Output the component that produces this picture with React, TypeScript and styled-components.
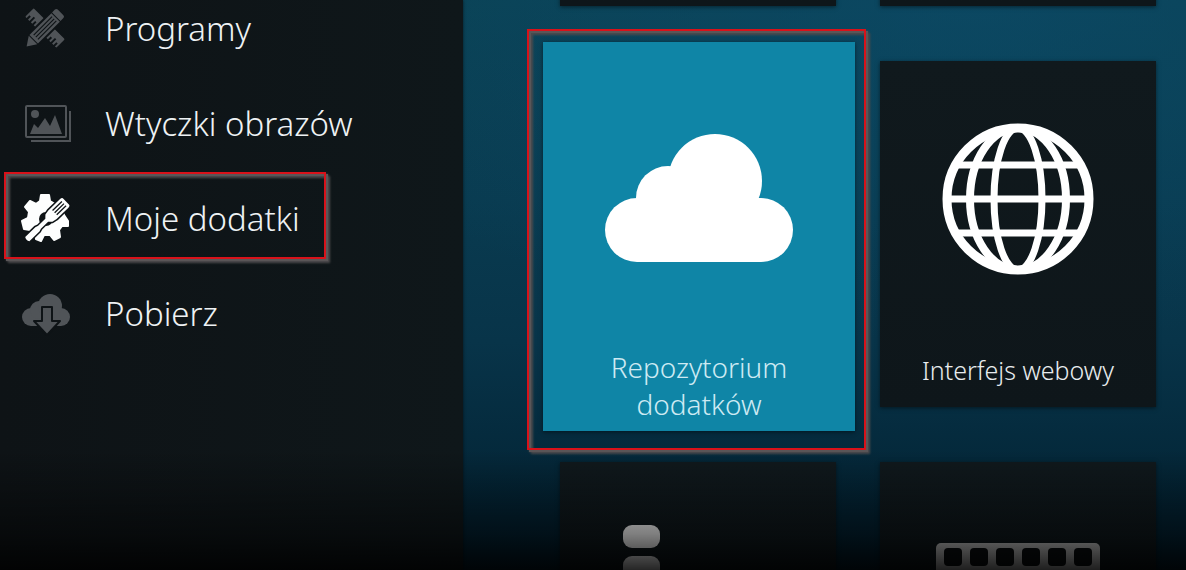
import React from "react";
import styled, { createGlobalStyle, css } from "styled-components";

const GlobalStyle = createGlobalStyle`
  * { box-sizing: border-box; }
  body {
    margin: 0;
    background: #000;
    font-family: "Noto Sans", "Open Sans", sans-serif;
    font-weight: 300;
  }
  button {
    font: inherit;
    color: inherit;
    border: 0;
    cursor: pointer;
  }
`;

const Screen = styled.div`
  position: relative;
  display: flex;
  height: 100vh;
  overflow: hidden;
  background:
    radial-gradient(ellipse 60% 60% at 82% 0%, rgba(12, 74, 104, 0.7), transparent),
    linear-gradient(180deg, #0a4254 0%, #093b50 35%, #083449 60%, #04283a 82%, #021e2e 100%);
`;

const BottomFade = styled.div`
  position: absolute;
  inset: auto 0 0 0;
  height: 120px;
  pointer-events: none;
  background: linear-gradient(180deg, transparent, rgba(0, 0, 0, 0.5) 70%, rgba(0, 0, 0, 0.85));
`;

const Sidebar = styled.nav`
  flex: 0 0 463px;
  background: linear-gradient(90deg, #0e1316, #0f171a);
  box-shadow: 0 0 3px rgba(0, 0, 0, 0.6);
`;

const Menu = styled.ul`
  list-style: none;
  margin: -19px 0 0;
  padding: 0;
`;

const frame = css`
  content: "";
  position: absolute;
  border: 2px solid #d8121a;
  filter: drop-shadow(2px 2px 0 #5a5658) drop-shadow(2px 2px 1px #4c4a4c);
  pointer-events: none;
`;

const MenuButton = styled.button<{ $active?: boolean }>`
  position: relative;
  display: flex;
  align-items: center;
  gap: 35px;
  width: 100%;
  height: 95px;
  padding: 0 22px;
  background: none;
  color: #eef2f4;
  font-size: 33px;
  line-height: 48px;
  text-align: left;

  svg {
    flex: none;
    overflow: visible;
    color: ${(p) => (p.$active ? "#fdfefe" : "#505458")};
  }

  ${(p) =>
    p.$active &&
    css`
      &::after {
        ${frame}
        inset: 1px 137px 7px 4px;
      }
    `}
`;

const Main = styled.main`
  flex: 1;
  min-width: 0;
  padding: 0 30px 0 97px;
`;

const TileGrid = styled.div`
  display: grid;
  grid-template-columns: 1fr 1fr;
  grid-auto-rows: 346px;
  gap: 55px 44px;
  margin-top: -340px;
`;

const Tile = styled.button<{ $focused?: boolean }>`
  position: relative;
  display: flex;
  flex-direction: column;
  align-items: center;
  justify-content: space-between;
  padding: 62px 20px 4px;
  background: linear-gradient(180deg, #10191d, #0e161a);
  color: #e8ecee;
  font-size: 25px;
  line-height: 33px;
  box-shadow: 0 1px 4px rgba(0, 0, 0, 0.5);

  ${(p) =>
    p.$focused &&
    css`
      margin: -19px -19px -24px -17px;
      padding: 92px 40px 8px;
      background: #0f85a6;
      color: #cdeaf3;
      font-size: 28px;
      line-height: 37px;

      &::after {
        ${frame}
        inset: -13px -11px -19px -16px;
      }
    `}
`;

const FilmTile = styled(Tile)`
  padding-top: 81px;
`;

const TileLabel = styled.span`
  display: flex;
  align-items: center;
  min-height: 2lh;
`;

const ToolsIcon = () => (
  <svg width="48" height="48" viewBox="0 0 48 48" fill="currentColor" aria-hidden="true">
    <g transform="translate(23 23)">
      <path
        transform="rotate(45)"
        d="M-21 -6 H21 Q22 -6 22 -5 V5 Q22 6 21 6 H20 V2 H18 V6 H16 V0 H14 V6 H12 V2 H10 V6 H-10 V2 H-12 V6 H-14 V0 H-16 V6 H-18 V2 H-20 V6 H-21 Q-22 6 -22 5 V-5 Q-22 -6 -21 -6 Z"
      />
      <g transform="rotate(-45)">
        <path d="M-27 0 L-14 -8 H24 V8 H-14 Z" fill="#0e1316" />
        <path d="M-26 0 L-17 -6 V6 Z" />
        <rect x="-16" y="-6" width="31" height="12" />
        <path d="M16 -6 H20 Q22 -6 22 -4 V4 Q22 6 20 6 H16 Z" />
        <path d="M-13 -3 H13 M-13 0 H13 M-13 3 H13" stroke="#0e1316" strokeWidth="1.2" />
      </g>
    </g>
  </svg>
);

const PicturesIcon = () => (
  <svg width="48" height="48" viewBox="0 0 48 48" fill="currentColor" aria-hidden="true">
    <rect x="4" y="6" width="40" height="31" rx="1" fill="none" stroke="currentColor" strokeWidth="2" />
    <path d="M9 41 H48 V11" fill="none" stroke="currentColor" strokeWidth="2" />
    <circle cx="13" cy="14" r="4" />
    <path d="M8 34 L12 24 L16 28 L23 18 L28 26 L33 15 L40 34 Z" />
  </svg>
);

const AddonsIcon = () => (
  <svg width="48" height="48" viewBox="0 0 48 48" fill="currentColor" aria-hidden="true">
    <path
      fillRule="evenodd"
      stroke="currentColor"
      strokeWidth="2"
      strokeLinejoin="round"
      d="M19 0 H27 L28 6 L33 9 L38 5 L43 10 L40 15 L42 20 L46 26 L46 31 L40 31 L37 35 L38 42 L32 45 L28 40 L22 40 L19 46 L14 44 L13 38 L8 35 L2 34 L0 26 L6 23 L7 17 L3 12 L8 6 L14 9 L18 6 Z M24 16 A8 8 0 1 0 24 32 A8 8 0 1 0 24 16 Z"
    />
    <g transform="translate(24 26) rotate(-44)">
      <path
        d="M-27 -3 L-12 -3 L-9 -2 H1 L4 -5 L9 -6 H25 Q28 -6 28 -4 V4 Q28 6 25 6 H9 L4 5 L1 2 H-9 L-12 3 L-27 3 Z"
        fill="#0e1316"
        stroke="#0e1316"
        strokeWidth="3"
        strokeLinejoin="round"
      />
      <path d="M-26 -3 L-12 -3 L-9 -2 H1 L4 -5 L9 -6 H25 Q28 -6 28 -4 V4 Q28 6 25 6 H9 L4 5 L1 2 H-9 L-12 3 L-26 3 Q-28 0 -26 -3 Z" />
      <path d="M12 -3 H25 M12 0 H25 M12 3 H25" stroke="#0e1316" strokeWidth="1.3" />
    </g>
  </svg>
);

const DownloadIcon = () => (
  <svg width="48" height="48" viewBox="0 0 48 48" fill="currentColor" aria-hidden="true">
    <rect x="0" y="18" width="48" height="18" rx="9" />
    <circle cx="17" cy="20" r="9" />
    <circle cx="28" cy="16" r="12" />
    <path d="M20 17 H30 V31 H38 L25 45 L12 31 H20 Z" stroke="#0e1316" strokeWidth="2" strokeLinejoin="round" />
  </svg>
);

const CloudIcon = () => (
  <svg width="188" height="128" viewBox="0 0 188 128" fill="#fff" aria-hidden="true">
    <rect y="64" width="188" height="64" rx="32" />
    <circle cx="63" cy="64" r="32" />
    <circle cx="110" cy="47" r="47" />
  </svg>
);

const GlobeIcon = () => (
  <svg width="152" height="152" viewBox="0 0 152 152" fill="none" stroke="#fff" strokeWidth="7" aria-hidden="true">
    <circle cx="76" cy="76" r="71" strokeWidth="9" />
    <ellipse cx="76" cy="76" rx="24" ry="71" />
    <ellipse cx="76" cy="76" rx="48" ry="71" strokeWidth="8" />
    <path d="M15 42 H137" />
    <path d="M5 76 H147" />
    <path d="M15 110 H137" />
  </svg>
);

const ListIcon = () => (
  <svg width="150" height="150" viewBox="0 0 150 150" fill="#fff" aria-hidden="true">
    <rect y="1" width="37" height="23" rx="9" />
    <rect y="32" width="37" height="23" rx="9" />
    <rect y="63" width="37" height="23" rx="9" />
  </svg>
);

const FilmIcon = () => (
  <svg width="164" height="114" viewBox="0 0 164 114" aria-hidden="true">
    <rect width="164" height="114" rx="5" fill="#d0d0d0" />
    {[0, 1, 2, 3, 4, 5].map((i) => (
      <rect key={i} x={8 + i * 26} y="5" width="18" height="18" rx="4" fill="#0b0f11" />
    ))}
  </svg>
);

const menu = [
  { label: "Programy", Icon: ToolsIcon },
  { label: "Wtyczki obrazów", Icon: PicturesIcon },
  { label: "Moje dodatki", Icon: AddonsIcon, active: true },
  { label: "Pobierz", Icon: DownloadIcon },
];

export default function App() {
  return (
    <>
      <GlobalStyle />
      <Screen>
        <Sidebar>
          <Menu>
            {menu.map(({ label, Icon, active }) => (
              <li key={label}>
                <MenuButton $active={active}>
                  <Icon />
                  {label}
                </MenuButton>
              </li>
            ))}
          </Menu>
        </Sidebar>
        <Main>
          <TileGrid>
            <Tile />
            <Tile />
            <Tile $focused>
              <CloudIcon />
              <TileLabel>Repozytorium dodatków</TileLabel>
            </Tile>
            <Tile>
              <GlobeIcon />
              <TileLabel>Interfejs webowy</TileLabel>
            </Tile>
            <Tile>
              <ListIcon />
            </Tile>
            <FilmTile>
              <FilmIcon />
            </FilmTile>
          </TileGrid>
        </Main>
        <BottomFade />
      </Screen>
    </>
  );
}
